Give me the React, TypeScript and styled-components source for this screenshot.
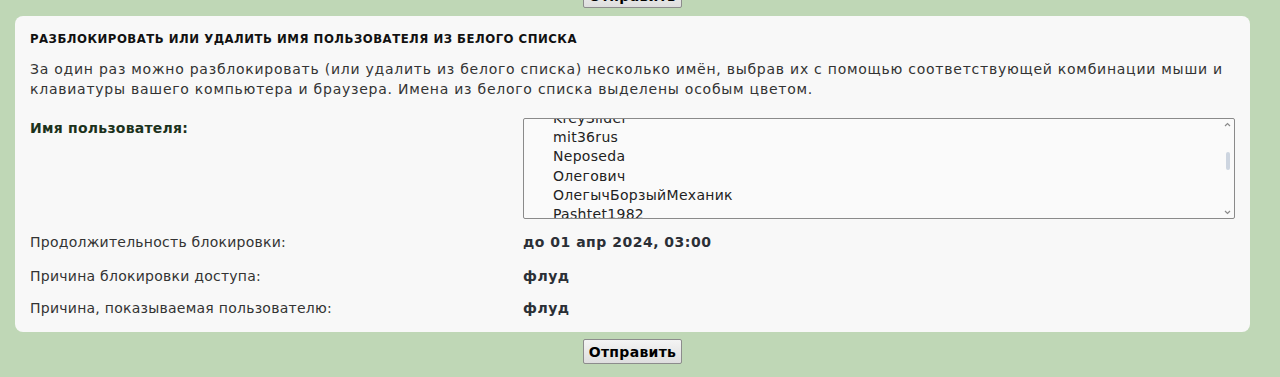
import React, { useEffect, useRef } from "react";
import styled, { createGlobalStyle } from "styled-components";

const GlobalStyle = createGlobalStyle`
  html, body {
    margin: 0;
    padding: 0;
    background: #bfd7b6;
    overflow: hidden;
  }
  body {
    font-family: "DejaVu Sans", Verdana, sans-serif;
    font-size: 14px;
    color: #333;
  }
`;

const Page = styled.div`
  margin-top: -17px;
  padding: 0 30px 12px 15px;
`;

const ButtonRow = styled.div`
  display: flex;
  justify-content: center;
`;

const SubmitButton = styled.button`
  width: 99px;
  height: 25px;
  padding: 0;
  border: 1px solid #8c8c8c;
  border-radius: 2px;
  background: linear-gradient(#f4f4f4, #dedede);
  font-family: "DejaVu Sans", Verdana, sans-serif;
  font-size: 14px;
  font-weight: bold;
  letter-spacing: 0.3px;
  color: #000;
  cursor: pointer;
`;

const Panel = styled.div`
  margin: 8px 0 7px 0;
  background: #f8f8f8;
  border-radius: 8px;
  padding: 15px 15px 14px 15px;
`;

const Heading = styled.h3`
  margin: 0 0 12px 0;
  font-family: "DejaVu Sans Condensed", "DejaVu Sans", sans-serif;
  font-stretch: condensed;
  font-size: 13px;
  font-weight: bold;
  letter-spacing: 0.5px;
  color: #111;
  line-height: 16px;
`;

const Intro = styled.p`
  margin: 0 0 19px 0;
  line-height: 20px;
  letter-spacing: 0.75px;
  color: #333;
`;

const FieldRow = styled.div<{ $gap?: number }>`
  display: flex;
  align-items: flex-start;
  margin-top: ${(p) => p.$gap ?? 0}px;
`;

const Label = styled.div<{ $strong?: boolean }>`
  width: 493px;
  flex-shrink: 0;
  line-height: 20px;
  letter-spacing: 0.25px;
  font-weight: ${(p) => (p.$strong ? "bold" : "normal")};
  color: ${(p) => (p.$strong ? "#1c321c" : "#333")};
  padding-top: ${(p) => (p.$strong ? "-1px" : "0")};
`;

const Value = styled.div`
  line-height: 20px;
  font-weight: bold;
  letter-spacing: 0.5px;
  color: #2b2f36;
`;

const ListBox = styled.div`
  flex: 1;
  height: 99px;
  border: 1px solid #8a8a8a;
  border-radius: 2px;
  background: #fafafa;
  display: flex;
`;

const Options = styled.div`
  flex: 1;
  height: 99px;
  overflow: hidden;
`;

const Option = styled.div`
  height: 19.3px;
  line-height: 19.3px;
  padding-left: 29px;
  letter-spacing: 0.3px;
  color: #222;
  white-space: nowrap;
`;

const Scrollbar = styled.div`
  width: 13px;
  display: flex;
  flex-direction: column;
  align-items: center;
  justify-content: space-between;
  padding: 3px 0;
`;

const Track = styled.div`
  flex: 1;
  width: 100%;
  display: flex;
  justify-content: center;
  padding-top: 25px;
`;

const Thumb = styled.div`
  width: 4px;
  height: 18px;
  border-radius: 2px;
  background: #cdd5e0;
`;

const Arrow = ({ down }: { down?: boolean }) => (
  <svg width="7" height="5" viewBox="0 0 7 5">
    <path
      d={down ? "M1 1 L3.5 3.5 L6 1" : "M1 4 L3.5 1.5 L6 4"}
      fill="none"
      stroke="#8a8a8a"
      strokeWidth="1.2"
    />
  </svg>
);

const users = [
  "Alex_Sh",
  "Bormotun",
  "dimon77",
  "Garik",
  "ivan_petrov",
  "Kostyan",
  "KreySlider",
  "mit36rus",
  "Neposeda",
  "Олегович",
  "ОлегычБорзыйМеханик",
  "Pashtet1982",
  "Rostovchanin",
  "Semenych",
  "Slavik_M",
  "Tolik",
  "vasya_k",
  "Zhenya",
];

function App(): JSX.Element {
  const listRef = useRef<HTMLDivElement>(null);

  useEffect(() => {
    if (listRef.current) listRef.current.scrollTop = 126;
  }, []);

  return (
    <>
      <GlobalStyle />
      <Page>
        <ButtonRow>
          <SubmitButton>Отправить</SubmitButton>
        </ButtonRow>

        <Panel>
          <Heading>РАЗБЛОКИРОВАТЬ ИЛИ УДАЛИТЬ ИМЯ ПОЛЬЗОВАТЕЛЯ ИЗ БЕЛОГО СПИСКА</Heading>
          <Intro>
            За один раз можно разблокировать (или удалить из белого списка) несколько имён,
            выбрав их с помощью соответствующей комбинации мыши и клавиатуры вашего компьютера и
            браузера. Имена из белого списка выделены особым цветом.
          </Intro>

          <FieldRow>
            <Label $strong>Имя пользователя:</Label>
            <ListBox>
              <Options ref={listRef}>
                {users.map((name) => (
                  <Option key={name}>{name}</Option>
                ))}
              </Options>
              <Scrollbar>
                <Arrow />
                <Track>
                  <Thumb />
                </Track>
                <Arrow down />
              </Scrollbar>
            </ListBox>
          </FieldRow>

          <FieldRow $gap={13}>
            <Label>Продолжительность блокировки:</Label>
            <Value>до 01 апр 2024, 03:00</Value>
          </FieldRow>
          <FieldRow $gap={14}>
            <Label>Причина блокировки доступа:</Label>
            <Value>флуд</Value>
          </FieldRow>
          <FieldRow $gap={12}>
            <Label>Причина, показываемая пользователю:</Label>
            <Value>флуд</Value>
          </FieldRow>
        </Panel>

        <ButtonRow>
          <SubmitButton>Отправить</SubmitButton>
        </ButtonRow>
      </Page>
    </>
  );
}

export default App;
